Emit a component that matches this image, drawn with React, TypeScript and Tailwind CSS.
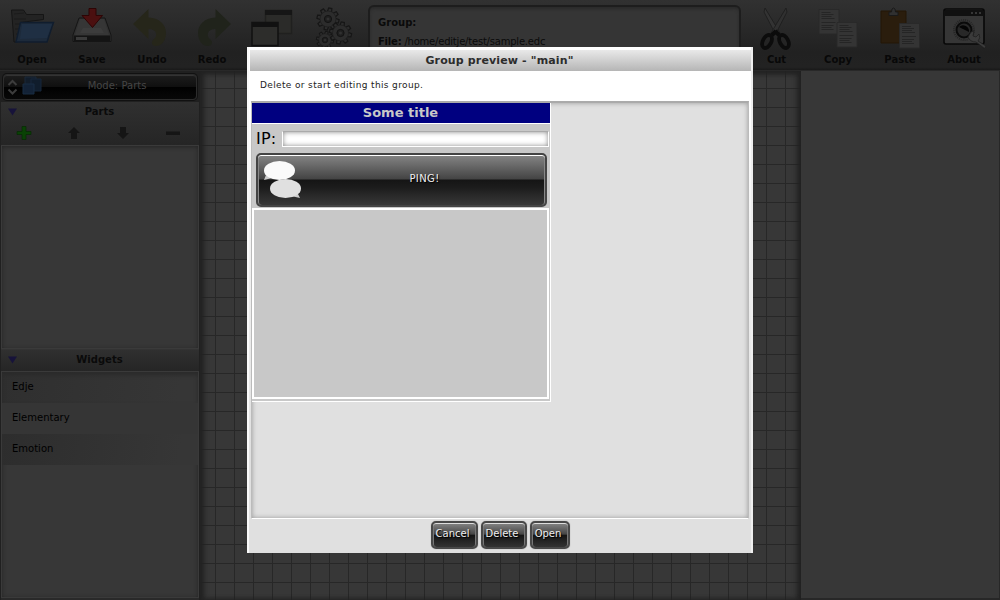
import React from "react";

const OpenIcon = () => (
  <svg width="46" height="40" viewBox="0 0 46 40">
    <path d="M2.500 2h12l3 4.500h17v5l-23 3-3 19.500H5z" fill="#232323" stroke="#151515" />
    <path d="M5 6l10-1M5 11h12M6 16h6M6 21h5M7 26h3" stroke="#1b1b1b" />
    <path d="M11.500 14.500h33l-6.500 19.500H7z" fill="#1d2a3a" stroke="#101d2e" strokeWidth="1.400" />
    <path d="M13 16h30l-5 14-27 1z" fill="#1f2f43" />
  </svg>
);
const SaveIcon = () => (
  <svg width="42" height="40" viewBox="0 0 42 40">
    <path d="M8 10h26l6 17v6.500H2V27z" fill="#303030" stroke="#151515" />
    <path d="M9 11h24l5 16H4z" fill="#363636" />
    <path d="M12 20h18l3 5H9z" fill="#3c3c3c" />
    <path d="M3 27.500h36V33H3z" fill="#141414" />
    <path d="M5 29h11v3H5z" fill="#3a3a3a" />
    <path d="M18 .500h7v7h6.500L21.500 19.500 11 7.500h7z" fill="#4b1010" stroke="#2d0505" />
  </svg>
);
const TurnIcon = ({ fill }: { fill: string }) => (
  <svg width="34" height="38" viewBox="0 0 34 38">
    <path d="M0 15L15.500 0v8.500C27 9 33 16 33 24c0 7-4 13-10 13-5 0-5-5-2-7 4-3 3-10-5.500-10v10z" fill={fill} />
  </svg>
);
const WindowsIcon = () => (
  <svg width="42" height="38" viewBox="0 0 42 38">
    <path d="M14.500 1.500h26v23h-26z" fill="#2b2b29" stroke="#20201f" strokeWidth="1.500" />
    <path d="M14 1h27v5H14z" fill="#161616" />
    <path d="M1 13.500h26v23H1z" fill="#2d2d2b" stroke="#101010" strokeWidth="1.500" />
    <path d="M1 13h26v5H1z" fill="#111" />
  </svg>
);
const Gear = ({ x, y, s }: { x: number; y: number; s: number }) => (
  <g transform={`translate(${x} ${y}) scale(${s})`}>
    {[0, 45, 90, 135, 180, 225, 270, 315].map((a) => (
      <path key={a} d="M-2.200-7l.6-4h3.200l.6 4z" transform={`rotate(${a + 12})`} fill="#2c2c2c" stroke="#161616" strokeWidth="1.200" />
    ))}
    <circle r="8" fill="#2c2c2c" stroke="#1c1c1c" strokeWidth=".6" />
    <circle r="3.600" fill="#1f1f1f" stroke="#131313" />
    <circle r="1.500" fill="#303030" />
  </g>
);
const GearsIcon = () => (
  <svg width="38" height="42" viewBox="0 0 38 42">
    <Gear x={13} y={12} s={1} />
    <Gear x={10} y={33} s={0.78} />
    <Gear x={25.500} y={26} s={1} />
  </svg>
);
const CutIcon = () => (
  <svg width="32" height="44" viewBox="0 0 32 44">
    <path d="M5 1l15 25-4 2L4 5z" fill="#333" stroke="#1c1c1c" strokeWidth=".8" />
    <path d="M26 1L11 26l4 2L27 5z" fill="#303030" stroke="#1c1c1c" strokeWidth=".8" />
    <path d="M15 24l4 4M16 24l-4 4" stroke="#0b0b0b" strokeWidth="4" />
    <ellipse cx="7" cy="34.500" rx="4.200" ry="7" transform="rotate(28 7 34.500)" fill="none" stroke="#0c0c0c" strokeWidth="3.800" />
    <ellipse cx="24" cy="34.500" rx="4.200" ry="7" transform="rotate(-28 24 34.500)" fill="none" stroke="#0c0c0c" strokeWidth="3.800" />
  </svg>
);
const Page = ({ x, y }: { x: number; y: number }) => (
  <g transform={`translate(${x} ${y})`}>
    <path d="M.5.500h20v24.500H.5z" fill="#343434" stroke="#292929" />
    <path d="M3 3.500h9M3 5.500h12M3 7.500h10M3 9.500h13M3 13.500h14M3 16.500h12M3 18.500h10M3 20.500h12" stroke="#242424" strokeWidth=".9" />
  </g>
);
const CopyIcon = () => (
  <svg width="40" height="40" viewBox="0 0 40 40">
    <Page x={0.500} y={1} />
    <Page x={18.500} y={14} />
  </svg>
);
const PasteIcon = () => (
  <svg width="40" height="42" viewBox="0 0 40 42">
    <path d="M1 4h25v32H1z" fill="#2a1d0d" stroke="#221606" />
    <path d="M9 8.500V5h2.500q0-4 2-4t2 4H18v3.500z" fill="#303030" stroke="#191919" />
    <Page x={19} y={16} />
  </svg>
);
const AboutIcon = () => (
  <svg width="44" height="42" viewBox="0 0 44 42">
    <rect x="1" y="2" width="40" height="35" rx="2" fill="#363636" stroke="#080808" strokeWidth="1.600" />
    <path d="M2 3h38v6H2z" fill="#101010" />
    <path d="M28 6h2M32 6h2M36 6h2" stroke="#363636" strokeWidth="2" />
    <circle cx="21" cy="23" r="10" fill="none" stroke="#252525" strokeWidth="2" strokeDasharray="1 1" />
    <circle cx="21" cy="23" r="7.500" fill="#282828" stroke="#0a0a0a" strokeWidth="2" />
    <path d="M16 20a6 6 0 0 1 10 5z" fill="#050505" />
    <path d="M31 24l-1 5 3 1 3-3q2 4-1 7l8 5-1.500 2.500L33 35q-6 0-8-5l3-5z" fill="#3b3b3b" stroke="#202020" strokeWidth=".8" />
  </svg>
);

const Tool = ({ label, w, children }: { label?: string; w: string; children: React.ReactNode }) => (
  <div className={`flex h-full shrink-0 flex-col items-center ${w}`}>
    <div className="flex h-[54px] items-center justify-center pt-0.5">{children}</div>
    <span className="text-[10px] leading-3 font-bold text-[#080808]">{label}</span>
  </div>
);

const Header = ({ title }: { title: string }) => (
  <div className="flex h-[19px] shrink-0 items-center pr-[1px] pl-[6px]">
    <svg width="12" height="8" viewBox="0 0 12 8"><path d="M1 .5h9L5.500 7.500z" fill="#17133a" /></svg>
    <span className="flex-1 pr-[18px] pb-px text-center text-[10px] font-bold text-[#0a0a0a]">{title}</span>
  </div>
);

const DarkButton = ({ label, w }: { label: string; w: string }) => (
  <button className={`flex h-7 items-center justify-center rounded-[5px] border-2 border-[#484848] bg-[linear-gradient(#858585_0%,#454545_47%,#141414_50%,#333_100%)] pr-[3px] pb-[2px] text-[10px] text-[#eee] shadow-[inset_0_1px_0_#ddd,inset_1px_0_0_#777,inset_-1px_0_0_#777,0_0_1px_#777] [text-shadow:1px_1px_1px_#000] ${w}`}>
    {label}
  </button>
);

const Row = ({ label, shade }: { label: string; shade: string }) => (
  <div className={`flex h-[31px] items-center pb-0.5 pl-2.5 text-[10px] text-black ${shade}`}>{label}</div>
);

export default function App() {
  return (
    <div className="relative flex h-[600px] w-[1000px] flex-col overflow-hidden bg-[#222] font-['DejaVu_Sans',sans-serif]">
      <header className="flex h-[71px] shrink-0 border-b border-[#282828] bg-[linear-gradient(#313131,#2a2a2a_35%,#212121_75%,#222_96%,#191919)] pl-0.5">
        <Tool label="Open" w="w-[60px]"><OpenIcon /></Tool>
        <Tool label="Save" w="w-[60px]"><SaveIcon /></Tool>
        <Tool label="Undo" w="w-[60px]"><div className="pr-1"><TurnIcon fill="#26261a" /></div></Tool>
        <Tool label="Redo" w="w-[60px]"><div className="-scale-x-100 pr-[3px]"><TurnIcon fill="#20231b" /></div></Tool>
        <Tool w="w-[60px]"><WindowsIcon /></Tool>
        <Tool w="w-[66px]"><div className="pr-0.5"><GearsIcon /></div></Tool>
        <section className="mt-[5px] h-[60px] w-[373px] rounded-md border-2 border-[#1d1d1d] bg-[#353535] pt-[9px] pl-2 text-[10px] text-[#0a0a0a] shadow-[inset_0_2px_3px_#2a2a2a]">
          <p className="h-[19px] leading-[14px] font-bold">Group:</p>
          <p className="leading-[14px] tracking-[-0.21px]"><b>File:</b> /home/editje/test/sample.edc</p>
        </section>
        <div className="w-[5px]" />
        <Tool label="Cut" w="w-[61px]"><div className="pt-px pr-[2px]"><CutIcon /></div></Tool>
        <Tool label="Copy" w="w-[62px]"><CopyIcon /></Tool>
        <Tool label="Paste" w="w-[62px]"><PasteIcon /></Tool>
        <Tool label="About" w="w-[66px]"><div className="pl-0.5"><AboutIcon /></div></Tool>
      </header>

      <main className="flex h-[529px]">
        <aside className="flex w-[200px] flex-col border-x border-[#202020] bg-[#292929] pb-0.5">
          <div className="flex h-[31px] items-center justify-center bg-[#202020]">
            <button className="flex h-[26px] w-[194px] items-center rounded border border-[#2c2c2c] bg-[linear-gradient(#1d1d1d,#101010_48%,#010101_52%,#080808)] pl-[3px] text-[10px] text-[#454545] shadow-[inset_0_1px_0_#333,0_0_0_1px_#111]">
              <svg width="11" height="18" viewBox="0 0 11 18"><path d="M1.500 7l4-4 4 4M1.500 11.500l4 4 4-4" fill="none" stroke="#3c3c3c" strokeWidth="2" /></svg>
              <svg className="mb-0.5 ml-1" width="20" height="20" viewBox="0 0 20 20">
                <path d="M3 1h11v9H3z" fill="#121d2a" stroke="#1a2838" /><path d="M9 3h10v12H9z" fill="#101d2c" stroke="#17273b" /><path d="M1 8h11v10H1z" fill="#132236" stroke="#192c43" />
              </svg>
              <span className="flex-1 pr-1 pb-[2px] text-center">Mode: Parts</span>
            </button>
          </div>
          <section className="flex h-[43px] flex-col bg-[linear-gradient(#303030,#252525)]">
            <Header title="Parts" />
            <div className="flex h-[23px] items-center pl-[15px]">
              <svg width="170" height="16" viewBox="0 0 170 16">
                <path d="M6 1.500h4v5h5v3h-5v5H6v-5H1v-3h5z" fill="#0a4205" stroke="#062903" strokeWidth=".7" />
                <path d="M58 2l6 6h-3v6h-6V8h-3z" fill="#151515" /><path d="M104 2h6v6h3l-6 6-6-6h3z" fill="#151515" /><path d="M150 6.500h14v3.500h-14z" fill="#151515" />
              </svg>
            </div>
          </section>
          <div className="h-[204px] border border-[#3a3a3a] bg-[#373737] shadow-[inset_0_1px_4px_#242424]" />
          <section className="flex h-[22px] items-start border-t border-[#333] bg-[linear-gradient(#303030,#252525)]"><div className="w-full"><Header title="Widgets" /></div></section>
          <section className="flex-1 border border-[#3a3a3a] bg-[#373737] shadow-[inset_0_1px_4px_#242424]">
            <Row label="Edje" shade="bg-[linear-gradient(100deg,#2f2f2f,#363636_90%)] shadow-[inset_0_3px_4px_#2a2a2a]" />
            <Row label="Elementary" shade="bg-[#353535]" />
            <Row label="Emotion" shade="bg-[linear-gradient(100deg,#2d2d2d,#363636_90%)]" />
          </section>
        </aside>
        <section className="w-[601px] bg-[#373737] bg-[linear-gradient(#272727_1px,transparent_1px),linear-gradient(90deg,#272727_1px,transparent_1px)] bg-[size:19px_19px] bg-[position:15px_17px] shadow-[inset_4px_0_5px_#222,inset_-4px_0_5px_#222,inset_0_3px_5px_#242424]" />
        <aside className="w-[199px] border-r border-b-2 border-[#272727] bg-[#373737]" />
      </main>

      <div className="absolute inset-0 flex items-center justify-center">
        <div role="dialog" className="flex h-[506px] w-[506px] flex-col border-x-2 border-[#eee] border-l-[#fafafa] bg-[linear-gradient(#fff_55px,#e0e0e0_400px)]">
          <h1 className="flex h-6 shrink-0 items-center justify-center border-t-[3px] border-l border-white bg-[linear-gradient(#e9e9e9,#b5b5b5)] pt-px pr-[2px] text-[11px] font-bold tracking-[0.14px] text-[#2c2c2c]">Group preview - "main"</h1>
          <p className="flex h-[30px] shrink-0 items-center bg-white pb-px pl-[11px] text-[9px] tracking-[0.36px] text-[#222]">Delete or start editing this group.</p>
          <div className="mx-[2px] flex h-[418px] shrink-0 flex-col items-start border border-[#bbb] border-t-2 border-t-[#aaa] border-b-white bg-[#e0e0e0] shadow-[inset_0_0_5px_#999]">
            <div className="flex h-[299px] w-[299px] flex-col border-r border-b border-white bg-[#c8c8c8]">
              <h2 className="flex h-[21px] shrink-0 items-center justify-center border-b border-white bg-[#000080] pr-px text-[13px] font-bold text-[#c8c8c8]">Some title</h2>
              <div className="flex h-[29px] shrink-0 items-center pl-1 text-[16px] text-black">
                <label className="w-[26px] tracking-[0.2px]">IP:</label>
                <input aria-label="IP" className="h-4 w-[267px] min-w-0 border border-white border-t-[#aaa] bg-white shadow-[inset_0_0_5px_#888]" />
              </div>
              <button className="ml-1 flex h-[54px] w-[291px] shrink-0 items-center rounded-[5px] border-2 border-[#444] bg-[linear-gradient(#858585,#444_48%,#151515_50%,#1c1c1c_65%,#383838)] pl-1 text-[10px] text-[#eee] shadow-[inset_0_1px_0_#fff,inset_1px_0_0_#888,inset_-1px_0_0_#888]">
                <svg width="42" height="42" viewBox="0 0 42 42">
                  <path d="M4 16l-2 5 8-2z" fill="#ccc" /><ellipse cx="17.500" cy="11.500" rx="15.500" ry="9.500" fill="#fafafa" />
                  <path d="M35 33l3 6-9-2z" fill="#ccc" /><ellipse cx="23.500" cy="29.500" rx="15.500" ry="9.500" fill="#e0e0e0" />
                </svg>
                <span className="flex-1 pb-1 text-center tracking-[0.4px] [text-shadow:1px_1px_1px_#000]">PING!</span>
              </button>
              <div className="mt-px h-[191px] w-[297px] shrink-0 border-2 border-white" />
            </div>
          </div>
          <footer className="flex h-[34px] shrink-0 items-center justify-center gap-[3px] bg-[#e0e0e0] pb-[3px]">
            <DarkButton label="Cancel" w="w-[47px]" />
            <DarkButton label="Delete" w="w-[46px]" />
            <DarkButton label="Open" w="w-10" />
          </footer>
        </div>
      </div>
    </div>
  );
}
